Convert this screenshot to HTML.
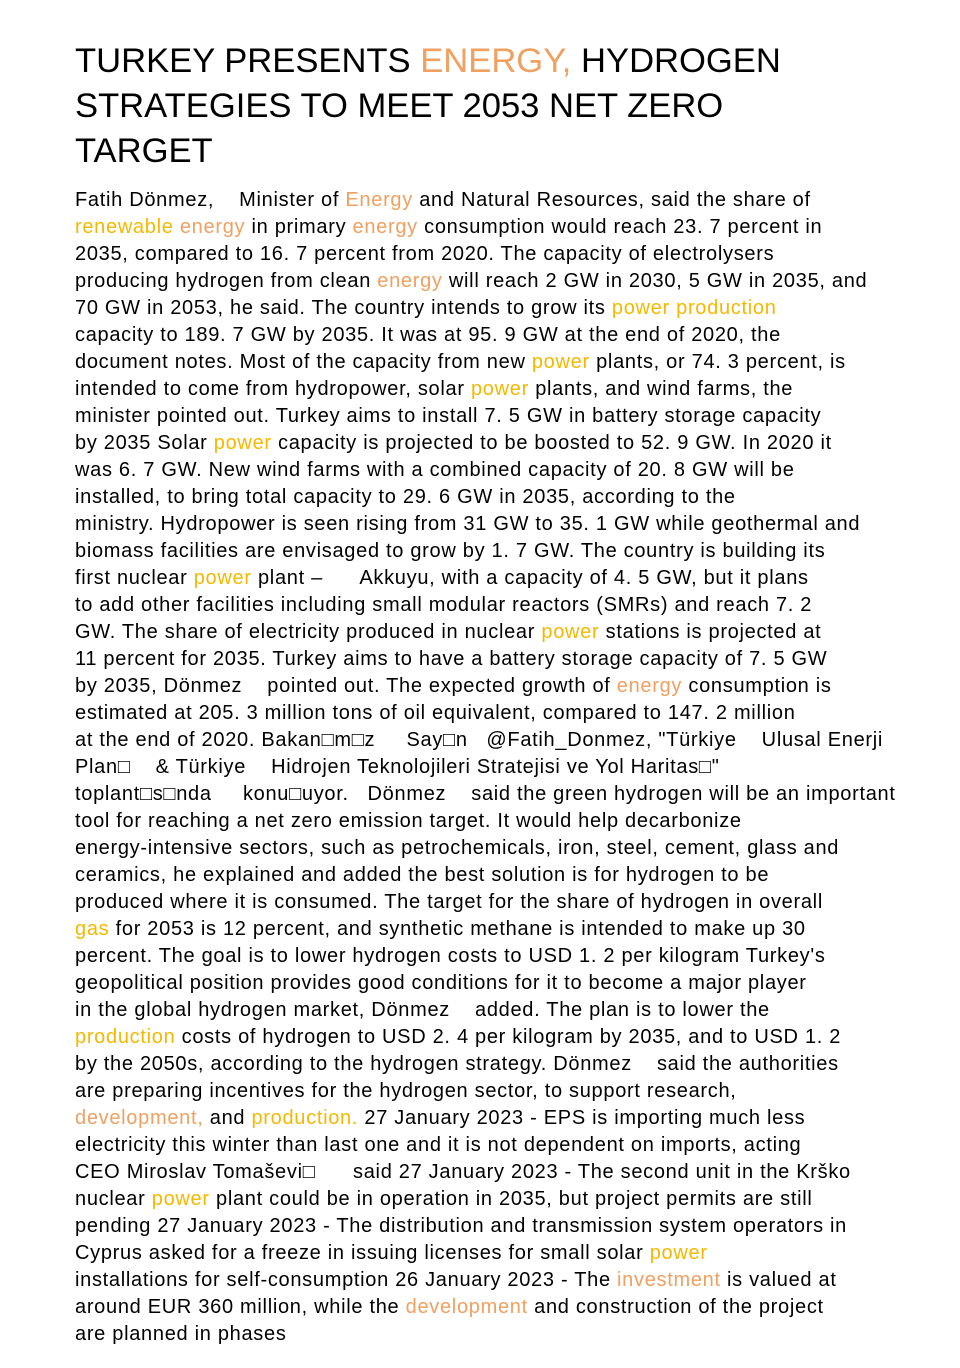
<!DOCTYPE html>
<html><head><meta charset="utf-8"><style>
body{margin:0;background:#fff;width:960px;height:1368px;overflow:hidden;font-family:"Liberation Sans",Arial,sans-serif;color:#000}
h1{position:absolute;left:75px;top:39px;margin:0;font-weight:normal;font-size:34.6px;line-height:45px;white-space:nowrap}
#b{position:absolute;left:75px;top:187px;font-size:20px;line-height:27px;white-space:pre;letter-spacing:0.7px}
.o{color:#f0a060}.y{color:#f5b800}
</style></head><body>
<h1>TURKEY PRESENTS <span class="o">ENERGY,</span> HYDROGEN<br>STRATEGIES TO MEET 2053 NET ZERO<br>TARGET</h1>
<div id="b">Fatih Dönmez,    Minister of <span class="o">Energy</span> and Natural Resources, said the share of
<span class="y">renewable</span> <span class="o">energy</span> in primary <span class="o">energy</span> consumption would reach 23. 7 percent in
2035, compared to 16. 7 percent from 2020. The capacity of electrolysers
producing hydrogen from clean <span class="o">energy</span> will reach 2 GW in 2030, 5 GW in 2035, and
70 GW in 2053, he said. The country intends to grow its <span class="y">power production</span>
capacity to 189. 7 GW by 2035. It was at 95. 9 GW at the end of 2020, the
document notes. Most of the capacity from new <span class="y">power</span> plants, or 74. 3 percent, is
intended to come from hydropower, solar <span class="y">power</span> plants, and wind farms, the
minister pointed out. Turkey aims to install 7. 5 GW in battery storage capacity
by 2035 Solar <span class="y">power</span> capacity is projected to be boosted to 52. 9 GW. In 2020 it
was 6. 7 GW. New wind farms with a combined capacity of 20. 8 GW will be
installed, to bring total capacity to 29. 6 GW in 2035, according to the
ministry. Hydropower is seen rising from 31 GW to 35. 1 GW while geothermal and
biomass facilities are envisaged to grow by 1. 7 GW. The country is building its
first nuclear <span class="y">power</span> plant –      Akkuyu, with a capacity of 4. 5 GW, but it plans
to add other facilities including small modular reactors (SMRs) and reach 7. 2
GW. The share of electricity produced in nuclear <span class="y">power</span> stations is projected at
11 percent for 2035. Turkey aims to have a battery storage capacity of 7. 5 GW
by 2035, Dönmez    pointed out. The expected growth of <span class="o">energy</span> consumption is
estimated at 205. 3 million tons of oil equivalent, compared to 147. 2 million
at the end of 2020. Bakan□m□z     Say□n   @Fatih_Donmez, "Türkiye    Ulusal Enerji
Plan□    &amp; Türkiye    Hidrojen Teknolojileri Stratejisi ve Yol Haritas□"
toplant□s□nda     konu□uyor.   Dönmez    said the green hydrogen will be an important
tool for reaching a net zero emission target. It would help decarbonize
energy-intensive sectors, such as petrochemicals, iron, steel, cement, glass and
ceramics, he explained and added the best solution is for hydrogen to be
produced where it is consumed. The target for the share of hydrogen in overall
<span class="y">gas</span> for 2053 is 12 percent, and synthetic methane is intended to make up 30
percent. The goal is to lower hydrogen costs to USD 1. 2 per kilogram Turkey's
geopolitical position provides good conditions for it to become a major player
in the global hydrogen market, Dönmez    added. The plan is to lower the
<span class="y">production</span> costs of hydrogen to USD 2. 4 per kilogram by 2035, and to USD 1. 2
by the 2050s, according to the hydrogen strategy. Dönmez    said the authorities
are preparing incentives for the hydrogen sector, to support research,
<span class="o">development,</span> and <span class="y">production.</span> 27 January 2023 - EPS is importing much less
electricity this winter than last one and it is not dependent on imports, acting
CEO Miroslav Tomaševi□      said 27 January 2023 - The second unit in the Krško
nuclear <span class="y">power</span> plant could be in operation in 2035, but project permits are still
pending 27 January 2023 - The distribution and transmission system operators in
Cyprus asked for a freeze in issuing licenses for small solar <span class="y">power</span>
installations for self-consumption 26 January 2023 - The <span class="o">investment</span> is valued at
around EUR 360 million, while the <span class="o">development</span> and construction of the project
are planned in phases</div>
</body></html>
